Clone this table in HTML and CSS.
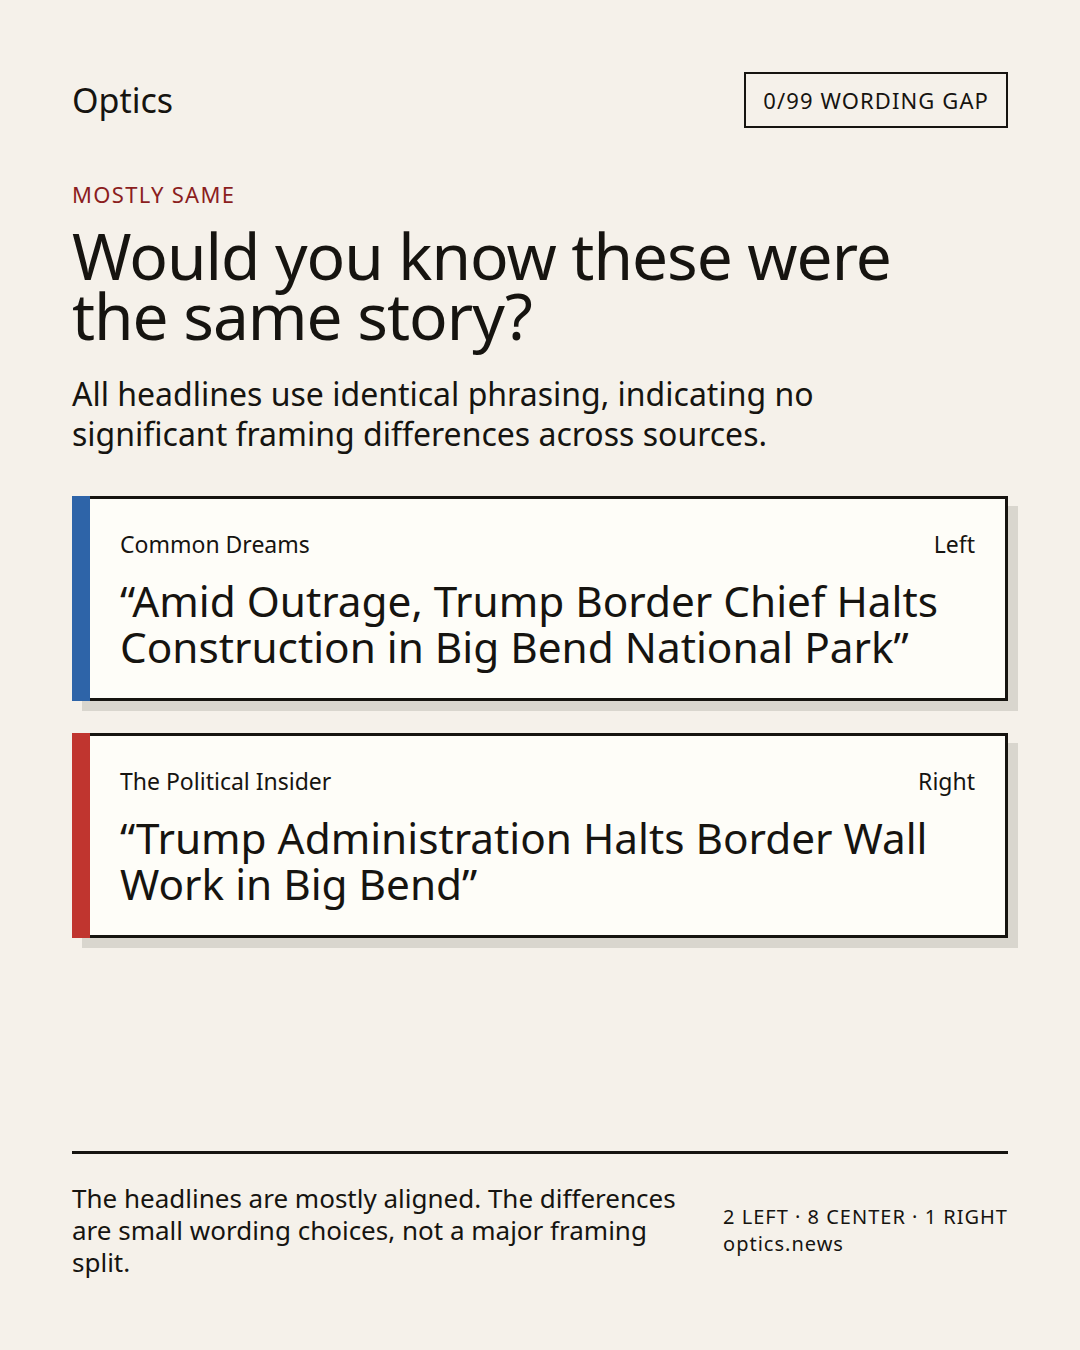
FILE: index.html
```html
<!DOCTYPE html>
<html lang="en">
<head>
<meta charset="utf-8">
<title>Optics</title>
<link rel="stylesheet" href="styles.css">
</head>
<body>
<div class="page">
  <header class="top">
    <div class="brand">Optics</div>
    <div class="badge">0/99 WORDING GAP</div>
  </header>
  <div class="eyebrow">MOSTLY SAME</div>
  <h1 class="title">Would you know these were the same story?</h1>
  <p class="lede">All headlines use identical phrasing, indicating no significant framing differences across sources.</p>
  <div class="cards">
    <div class="card card-left">
      <div class="bar"></div>
      <div class="card-body">
        <div class="meta"><span>Common Dreams</span><span>Left</span></div>
        <div class="headline">“Amid Outrage, Trump Border Chief Halts Construction in Big Bend National Park”</div>
      </div>
    </div>
    <div class="card card-right">
      <div class="bar"></div>
      <div class="card-body">
        <div class="meta"><span>The Political Insider</span><span>Right</span></div>
        <div class="headline">“Trump Administration Halts Border Wall Work in Big Bend”</div>
      </div>
    </div>
  </div>
  <footer class="foot">
    <p class="summary">The headlines are mostly aligned. The differences are small wording choices, not a major framing split.</p>
    <div class="stats">
      <div>2 LEFT · 8 CENTER · 1 RIGHT</div>
      <div>optics.news</div>
    </div>
  </footer>
</div>
</body>
</html>
```

FILE: styles.css
```css
html, body {
  margin: 0;
  padding: 0;
  background: #f5f1ea;
}
body {
  font-family: "Noto Sans", "Open Sans", sans-serif;
  color: #161410;
}
.page {
  box-sizing: border-box;
  width: 1080px;
  height: 1350px;
  padding: 72px;
  display: flex;
  flex-direction: column;
}
.top {
  display: flex;
  justify-content: space-between;
  align-items: center;
}
.brand {
  font-size: 34px;
  line-height: 1.362;
}
.badge {
  border: 2px solid #161410;
  height: 52px;
  box-sizing: content-box;
  padding: 0 17px 0 17px;
  display: flex;
  align-items: center;
  font-size: 22px;
  letter-spacing: 0.05em;
}
.eyebrow {
  margin-top: 52px;
  font-size: 22px;
  line-height: 1.3;
  letter-spacing: 0.06em;
  color: #8b1e1e;
}
.title {
  margin: 17px 0 0;
  font-weight: 400;
  font-size: 64px;
  line-height: 0.95;
  letter-spacing: -0.016em;
  max-width: 900px;
}
.lede {
  margin: 27px 0 0;
  font-size: 32px;
  line-height: 40px;
  max-width: 830px;
}
.cards {
  margin-top: 42px;
  display: flex;
  flex-direction: column;
  gap: 32px;
}
.card {
  display: flex;
  box-shadow: 10px 10px 0 #d9d6ce;
  background: #fefdf8;
}
.bar {
  width: 18px;
  flex: none;
}
.card-left .bar { background: #2e64a8; }
.card-right .bar { background: #c0352f; }
.card-body {
  flex: 1;
  border: 3px solid #161410;
  border-left: none;
  padding: 31px 30px 28px 30px;
}
.meta {
  display: flex;
  justify-content: space-between;
  font-size: 23px;
  line-height: 1.3;
}
.headline {
  margin-top: 18px;
  font-size: 42.3px;
  line-height: 46px;
}
.foot {
  margin-top: auto;
  border-top: 3px solid #161410;
  padding-top: 28px;
  display: flex;
  align-items: center;
  gap: 40px;
}
.summary {
  margin: 0;
  flex: 1;
  font-size: 26px;
  line-height: 32px;
}
.stats {
  flex: none;
  font-size: 20px;
  line-height: 27px;
  letter-spacing: 0.05em;
}
```
